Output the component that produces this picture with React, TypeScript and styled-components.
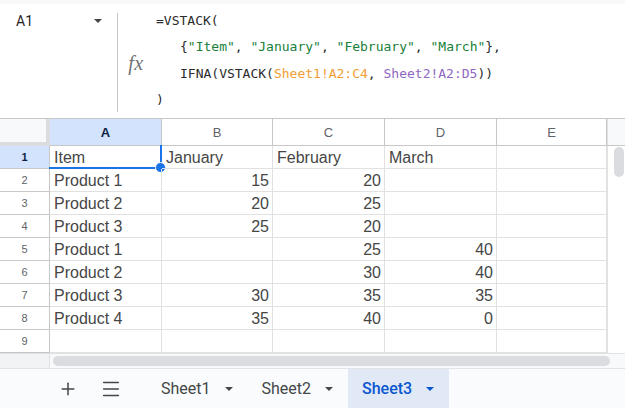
import React from "react";
import styled, {createGlobalStyle} from "styled-components";
import {Plus, Menu} from "lucide-react";

const GlobalStyle = createGlobalStyle`
  html, body {
    margin: 0;
    padding: 0;
    background: #ffffff;
  }
`

type CellValue = string | number | ""

const columns = ["A", "B", "C", "D", "E"]
const rows: CellValue[][] = [
    ["Item", "January", "February", "March", ""],
    ["Product 1", 15, 20, "", ""],
    ["Product 2", 20, 25, "", ""],
    ["Product 3", 25, 20, "", ""],
    ["Product 1", "", 25, 40, ""],
    ["Product 2", "", 30, 40, ""],
    ["Product 3", 30, 35, 35, ""],
    ["Product 4", 35, 40, 0, ""],
    ["", "", "", "", ""],
]
const sheets = ["Sheet1", "Sheet2", "Sheet3"]

const App: React.FC = () => {
    return (
        <Page>
            <GlobalStyle/>
            <FormulaBar>
                <NameBox>
                    <CellName>A1</CellName>
                    <Caret $color="#444746" $top={6}/>
                </NameBox>
                <Divider/>
                <FxBox>fx</FxBox>
                <Formula>
                    <Line>=VSTACK(</Line>
                    <Line $indent>
                        {"{"}<Str>"Item"</Str>, <Str>"January"</Str>, <Str>"February"</Str>, <Str>"March"</Str>{"},"}
                    </Line>
                    <Line $indent>
                        IFNA(VSTACK(<Ref $color="#f09d33">Sheet1!A2:C4</Ref>, <Ref $color="#8e67c2">Sheet2!A2:D5</Ref>))
                    </Line>
                    <Line>)</Line>
                </Formula>
            </FormulaBar>
            <SheetArea>
                <Grid>
                    <Corner/>
                    {columns.map((c, i) =>
                        <ColHeader key={c} $selected={i === 0}>{c}</ColHeader>
                    )}
                    {rows.map((row, r) => (
                        <React.Fragment key={r}>
                            <RowHeader $selected={r === 0}>{r + 1}</RowHeader>
                            {row.map((v, c) => (
                                <Cell key={c} $numeric={typeof v === "number"}>
                                    {v}
                                    {r === 0 && c === 0 &&
                                        <Selection>
                                            <Handle/>
                                        </Selection>
                                    }
                                </Cell>
                            ))}
                        </React.Fragment>
                    ))}
                </Grid>
                <VScroll>
                    <VScrollHead/>
                    <VTrack>
                        <VThumb/>
                    </VTrack>
                </VScroll>
            </SheetArea>
            <HScroll>
                <HScrollCorner/>
                <HTrack>
                    <HThumb/>
                </HTrack>
            </HScroll>
            <TabBar>
                <IconButton><Plus size={20} strokeWidth={1.8}/></IconButton>
                <IconButton><Menu size={22} strokeWidth={1.7}/></IconButton>
                <Tabs>
                    {sheets.map((s) => (
                        <Tab key={s} $active={s === "Sheet3"}>
                            {s}
                            <Caret $color={s === "Sheet3" ? "#0b57d0" : "#444746"} $top={1}/>
                        </Tab>
                    ))}
                </Tabs>
            </TabBar>
        </Page>
    )
}

const Page = styled.div`
  width: 625px;
  height: 408px;
  overflow: hidden;
  display: flex;
  flex-direction: column;
  font-family: "Liberation Sans", Arial, sans-serif;
  background: #ffffff;
`
const FormulaBar = styled.div`
  display: flex;
  flex-direction: row;
  height: 114px;
  border-top: 4px solid #f8f9fa;
  border-bottom: 1px solid #c7c7c7;
  flex-shrink: 0;
`
const NameBox = styled.div`
  width: 117px;
  box-sizing: border-box;
  padding: 9px 15px 0 16px;
  display: flex;
  flex-direction: row;
  justify-content: space-between;
  align-items: flex-start;
  height: 30px;
`
const CellName = styled.span`
  font-family: Roboto, "Liberation Sans", sans-serif;
  font-size: 14px;
  line-height: 16px;
  color: #1f1f1f;
`
const Caret = styled.span<{ $color: string; $top: number }>`
  display: inline-block;
  width: 0;
  height: 0;
  border-left: 4px solid transparent;
  border-right: 4px solid transparent;
  border-top: 4px solid ${(p) => p.$color};
  margin-top: ${(p) => p.$top}px;
`
const Divider = styled.div`
  width: 1px;
  background: #c7c7c7;
  margin: 9px 0 6px 0;
`
const FxBox = styled.div`
  width: 38px;
  display: flex;
  justify-content: center;
  align-items: center;
  padding-right: 2px;
  box-sizing: border-box;
  font-family: "Liberation Serif", serif;
  font-style: italic;
  font-size: 20px;
  letter-spacing: 0.5px;
  color: #6f7377;
  padding-top: 4px;
`
const Formula = styled.div`
  padding-top: 4px;
  font-family: "DejaVu Sans Mono", "Liberation Mono", monospace;
  font-size: 13px;
  color: #2b2b2b;
`
const Line = styled.div<{ $indent?: boolean }>`
  line-height: 26.4px;
  white-space: pre;
  padding-left: ${(p) => (p.$indent ? "24px" : "0")};
`
const Str = styled.span`
  color: #188038;
`
const Ref = styled.span<{ $color: string }>`
  color: ${(p) => p.$color};
`
const SheetArea = styled.div`
  display: flex;
  flex-direction: row;
  flex-shrink: 0;
`
const Grid = styled.div`
  display: grid;
  grid-template-columns: 50px 112px 111px 112px 112px 110px;
  grid-template-rows: 27px repeat(9, 23px);
`
const Corner = styled.div`
  background: #f8f9fa;
  border-right: 4px solid #dadce0;
  border-bottom: 4px solid #dadce0;
  box-sizing: border-box;
`
const ColHeader = styled.div<{ $selected?: boolean }>`
  display: flex;
  justify-content: center;
  align-items: center;
  box-sizing: border-box;
  border-right: 1px solid #c7c7c7;
  border-bottom: 1px solid #c7c7c7;
  background: ${(p) => (p.$selected ? "#d3e3fd" : "#ffffff")};
  color: ${(p) => (p.$selected ? "#0b1f44" : "#5f6368")};
  font-weight: ${(p) => (p.$selected ? 700 : 400)};
  font-size: 13px;
  padding-top: 1px;
`
const RowHeader = styled.div<{ $selected?: boolean }>`
  display: flex;
  justify-content: center;
  align-items: center;
  box-sizing: border-box;
  border-right: 1px solid #c7c7c7;
  border-bottom: 1px solid #c7c7c7;
  background: ${(p) => (p.$selected ? "#d3e3fd" : "#ffffff")};
  color: ${(p) => (p.$selected ? "#0b1f44" : "#5f6368")};
  font-weight: ${(p) => (p.$selected ? 700 : 400)};
  font-size: 11px;
`
const Cell = styled.div<{ $numeric?: boolean }>`
  position: relative;
  display: flex;
  align-items: center;
  justify-content: ${(p) => (p.$numeric ? "flex-end" : "flex-start")};
  box-sizing: border-box;
  padding: 1px 3px 0 4px;
  border-right: 1px solid #e1e1e1;
  border-bottom: 1px solid #e1e1e1;
  font-size: 16px;
  color: #464646;
  white-space: nowrap;
`
const Selection = styled.div`
  position: absolute;
  left: -1px;
  top: -1px;
  right: -1px;
  bottom: -1px;
  border-right: 2px solid #1a73e8;
  border-bottom: 2px solid #1a73e8;
  pointer-events: none;
`
const Handle = styled.div`
  position: absolute;
  right: -6px;
  bottom: -6px;
  width: 9px;
  height: 9px;
  border-radius: 50%;
  background: #1a73e8;
  border: 1px solid #ffffff;
`
const VScroll = styled.div`
  width: 18px;
  display: flex;
  flex-direction: column;
`
const VScrollHead = styled.div`
  height: 27px;
  box-sizing: border-box;
  background: #f8f9fa;
  border-bottom: 1px solid #c7c7c7;
  border-left: 1px solid #e1e1e1;
`
const VTrack = styled.div`
  flex: 1;
  border-left: 1px solid #e1e1e1;
  padding: 1px 1px 0 6px;
`
const VThumb = styled.div`
  width: 10px;
  height: 30px;
  border-radius: 5px;
  background: #dadce0;
`
const HScroll = styled.div`
  height: 15px;
  display: flex;
  flex-direction: row;
  border-bottom: 1px solid #e1e3e6;
  flex-shrink: 0;
`
const HScrollCorner = styled.div`
  width: 50px;
  box-sizing: border-box;
  background: #f1f3f4;
  border-right: 1px solid #e1e1e1;
  border-top: 1px solid #e1e1e1;
`
const HTrack = styled.div`
  flex: 1;
  padding: 2px 15px 0 3px;
  background: #f8f9fa;
  border-top: 1px solid #e1e1e1;
`
const HThumb = styled.div`
  height: 10px;
  border-radius: 5px;
  background: #dadce0;
`
const TabBar = styled.div`
  flex: 1;
  display: flex;
  flex-direction: row;
  align-items: stretch;
  background: #f9fbfd;
  padding-left: 50px;
`
const IconButton = styled.div`
  width: 36px;
  display: flex;
  justify-content: center;
  align-items: center;
  color: #444746;
  margin-right: 7px;
`
const Tabs = styled.div`
  display: flex;
  flex-direction: row;
  margin-left: 11px;
`
const Tab = styled.div<{ $active?: boolean }>`
  display: flex;
  flex-direction: row;
  align-items: center;
  gap: 14px;
  padding: 0 15px 0 14px;
  font-family: Roboto, "Liberation Sans", sans-serif;
  font-size: 16px;
  font-weight: ${(p) => (p.$active ? 500 : 400)};
  color: ${(p) => (p.$active ? "#0b57d0" : "#444746")};
  background: ${(p) => (p.$active ? "#e1e9f7" : "transparent")};
`
export default App
